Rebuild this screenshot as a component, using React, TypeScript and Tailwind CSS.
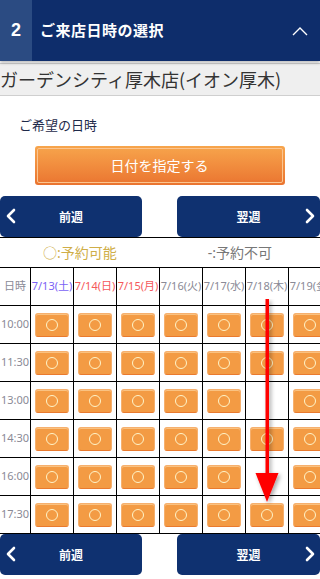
import React from "react";

const JP = { fontFamily: '"Noto Sans CJK JP", "Noto Sans", sans-serif' };

type DateCol = { label: string; color: string };
const dates: DateCol[] = [
  { label: "7/13(土)", color: "text-[#7b62f5]" },
  { label: "7/14(日)", color: "text-[#f5585a]" },
  { label: "7/15(月)", color: "text-[#f5585a]" },
  { label: "7/16(火)", color: "text-[#8a8a96]" },
  { label: "7/17(水)", color: "text-[#8a8a96]" },
  { label: "7/18(木)", color: "text-[#8a8a96]" },
  { label: "7/19(金)", color: "text-[#8a8a96]" },
];
const times = ["10:00", "11:30", "13:00", "14:30", "16:00", "17:30"];
const unavailable: Record<string, boolean> = {
  "13:00-5": true,
  "16:00-5": true,
};

function ChevronLeft() {
  return (
    <svg width="10" height="16" viewBox="0 0 10 16" fill="none">
      <polyline points="8,2 2,8 8,14" stroke="white" strokeWidth="2.6" strokeLinecap="round" strokeLinejoin="round" />
    </svg>
  );
}
function ChevronRight() {
  return (
    <svg width="10" height="16" viewBox="0 0 10 16" fill="none">
      <polyline points="2,2 8,8 2,14" stroke="white" strokeWidth="2.6" strokeLinecap="round" strokeLinejoin="round" />
    </svg>
  );
}

function NavRow() {
  return (
    <div className="flex justify-between h-[41px]">
      <div className="w-[142px] h-full bg-[#0f3170] rounded-[5px] flex items-center relative">
        <div className="absolute left-[6px] top-[12px]">
          <ChevronLeft />
        </div>
        <div className="flex-1 text-center text-white text-[12px] font-bold" style={JP}>
          前週
        </div>
      </div>
      <div className="w-[143px] h-full bg-[#0f3170] rounded-[5px] flex items-center relative">
        <div className="flex-1 text-center text-white text-[12px] font-bold" style={JP}>
          翌週
        </div>
        <div className="absolute right-[5px] top-[12px]">
          <ChevronRight />
        </div>
      </div>
    </div>
  );
}

function SlotButton() {
  return (
    <div className="w-[34px] h-[24px] rounded-[3px] bg-[#f39b44] border border-[#f6b06e] border-b-[#ea7a2e] flex items-center justify-center shadow-[inset_0_1px_0_rgba(255,220,170,0.6)]">
      <div className="w-[12px] h-[12px] rounded-full border border-[#fff4c8]" />
    </div>
  );
}

export default function App() {
  return (
    <div className="w-[320px] h-[579px] overflow-hidden bg-white relative" style={JP}>
      {/* Header */}
      <div className="h-[61px] flex bg-[#0e2d6b] relative z-10 shadow-[0_2px_3px_rgba(0,0,0,0.25)]">
        <div
          className="w-[32px] bg-[#2b4b82] flex items-center justify-center text-white text-[18px] font-bold"
          style={{ fontFamily: '"Liberation Sans", sans-serif' }}
        >
          2
        </div>
        <div className="flex-1 flex items-center pl-[8px] text-white text-[15px] font-bold tracking-[0.5px]">
          ご来店日時の選択
        </div>
        <div className="w-[40px] flex items-center justify-center">
          <svg width="16" height="10" viewBox="0 0 16 10" fill="none">
            <polyline points="1,9 8,2 15,9" stroke="white" strokeWidth="1.4" />
          </svg>
        </div>
      </div>

      {/* Store name */}
      <div className="mt-[2px] h-[33px] bg-[#efefef] border-y border-[#cfcfcf] flex items-center text-[18px] text-[#333] whitespace-nowrap">
        ガーデンシティ厚木店(イオン厚木)
      </div>

      <div className="mt-[19px] pl-[19px] text-[13px] leading-[20px] text-[#1e2a4a]">ご希望の日時</div>

      <div className="mt-[11px] flex justify-center">
        <div className="ml-[-1px] w-[250px] h-[39px] rounded-[3px] bg-gradient-to-b from-[#f7a54c] to-[#ea7430] p-[2px]">
          <div className="w-full h-full rounded-[2px] border border-[#fbc590] flex items-center justify-center text-white text-[14px]">
            日付を指定する
          </div>
        </div>
      </div>

      <div className="mt-[11px]">
        <NavRow />
      </div>

      {/* Table */}
      <div className="relative" style={{ fontFamily: '"Noto Sans", "Noto Sans CJK JP", sans-serif' }}>
        <div className="border-t border-black">
          <div className="h-[30px] flex border-b border-black text-[14px]">
            <div className="w-[160px] flex items-center justify-center text-[#cfae48]">○:予約可能</div>
            <div className="w-[160px] flex items-center justify-center text-[#777]">-:予約不可</div>
          </div>
          <div className="w-[331px] grid grid-cols-[31px_repeat(7,43px)]">
            <div className="h-[38px] border-r border-b border-black flex items-center justify-center text-[11px] text-[#8a8a96]">
              日時
            </div>
            {dates.map((d) => (
              <div
                key={d.label}
                className={`h-[38px] border-r border-b border-black flex items-center justify-center text-[11px] whitespace-nowrap overflow-visible ${d.color}`}
              >
                <span className="-mx-[4px]">{d.label}</span>
              </div>
            ))}
            {times.map((t) => (
              <React.Fragment key={t}>
                <div className="h-[38px] border-r border-b border-black flex items-center justify-end pr-[1px] text-[11px] text-[#8a8a96]">
                  {t}
                </div>
                {dates.map((d, i) => (
                  <div
                    key={d.label}
                    className="h-[38px] border-r border-b border-black flex items-center justify-center"
                  >
                    {!unavailable[`${t}-${i}`] && <SlotButton />}
                  </div>
                ))}
              </React.Fragment>
            ))}
          </div>
        </div>

        {/* Red arrow annotation */}
        <svg
          className="absolute left-[250px] top-[62px] pointer-events-none"
          width="36"
          height="212"
          viewBox="0 0 36 212"
        >
          <defs>
            <filter id="sh" x="-50%" y="-10%" width="200%" height="130%">
              <feDropShadow dx="2" dy="2" stdDeviation="2" floodColor="#000" floodOpacity="0.35" />
            </filter>
          </defs>
          <g filter="url(#sh)">
            <rect x="15.5" y="0" width="3.5" height="180" fill="#ff0000" />
            <polygon points="5.5,174 28.5,174 17,203" fill="#ff0000" />
          </g>
        </svg>
      </div>

      <NavRow />
    </div>
  );
}
